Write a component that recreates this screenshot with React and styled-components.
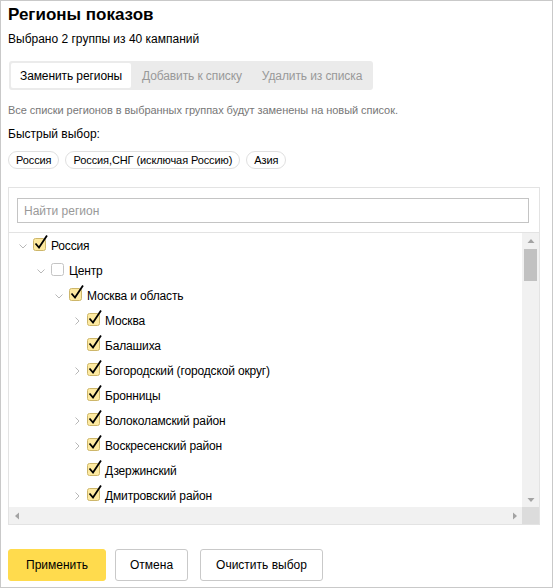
import React from 'react'
import styled, { createGlobalStyle } from 'styled-components'

const GlobalStyle = createGlobalStyle`
  html, body {
    margin: 0;
    padding: 0;
    background: #fff;
  }
  * {
    box-sizing: border-box;
  }
  body {
    font-family: "Liberation Sans", Arial, sans-serif;
    color: #000;
  }
`

const rows = [
  { level: 0, label: 'Россия', checked: true, arrow: 'down' },
  { level: 1, label: 'Центр', checked: false, arrow: 'down' },
  { level: 2, label: 'Москва и область', checked: true, arrow: 'down' },
  { level: 3, label: 'Москва', checked: true, arrow: 'right' },
  { level: 3, label: 'Балашиха', checked: true },
  { level: 3, label: 'Богородский (городской округ)', checked: true, arrow: 'right' },
  { level: 3, label: 'Бронницы', checked: true },
  { level: 3, label: 'Волоколамский район', checked: true, arrow: 'right' },
  { level: 3, label: 'Воскресенский район', checked: true, arrow: 'right' },
  { level: 3, label: 'Дзержинский', checked: true },
  { level: 3, label: 'Дмитровский район', checked: true, arrow: 'right' },
]

const quick = ['Россия', 'Россия,СНГ (исключая Россию)', 'Азия']
const tabs = ['Заменить регионы', 'Добавить к списку', 'Удалить из списка']

export default function App() {
  return (
    <>
      <GlobalStyle />
      <Frame>
        <Title>Регионы показов</Title>
        <Subtitle>Выбрано 2 группы из 40 кампаний</Subtitle>
        <Tabs>
          {tabs.map((t, i) => (
            <Tab key={t} $active={i === 0}>{t}</Tab>
          ))}
        </Tabs>
        <Hint>Все списки регионов в выбранных группах будут заменены на новый список.</Hint>
        <Label>Быстрый выбор:</Label>
        <Chips>
          {quick.map(q => <Chip key={q}>{q}</Chip>)}
        </Chips>
        <Panel>
          <SearchWrap>
            <Search placeholder="Найти регион" />
          </SearchWrap>
          <TreeArea>
            <List>
              {rows.map(r => (
                <Row key={r.label} $level={r.level}>
                  <Arrow>{r.arrow && <Chevron dir={r.arrow} />}</Arrow>
                  <Check checked={r.checked} />
                  <RowLabel>{r.label}</RowLabel>
                </Row>
              ))}
            </List>
            <VScroll>
              <ScrollBtn><Tri dir="up" /></ScrollBtn>
              <Thumb />
              <VSpace />
              <ScrollBtn><Tri dir="down" /></ScrollBtn>
            </VScroll>
            <HScroll>
              <ScrollBtn><Tri dir="left" /></ScrollBtn>
              <ScrollBtn><Tri dir="right" /></ScrollBtn>
            </HScroll>
            <Corner />
          </TreeArea>
        </Panel>
        <Footer>
          <Button $pad={17} $primary>Применить</Button>
          <Button $pad={14}>Отмена</Button>
          <Button $pad={15} $spaced>Очистить выбор</Button>
        </Footer>
      </Frame>
    </>
  )
}

const Chevron = ({ dir }) => (
  <svg width="8" height="8" viewBox="0 0 8 8">
    {dir === 'down'
      ? <path d="M0.5 2.5 L4 6 L7.5 2.5" fill="none" stroke="#b8b8b8" strokeWidth="1" />
      : <path d="M2.5 0.5 L6 4 L2.5 7.5" fill="none" stroke="#b8b8b8" strokeWidth="1" />}
  </svg>
)

const Check = ({ checked }) => (
  <CheckBox>
    <svg width="16" height="18" viewBox="0 0 16 18">
      <rect
        x="0.5" y="4.5" width="12" height="12" rx="2"
        fill={checked ? '#fde9a0' : '#fff'}
        stroke={checked ? '#cdb66a' : '#c4c4c4'}
      />
      {checked && (
        <path d="M2.5 9.5 L6 13.5 L14 1.5" fill="none" stroke="#000" strokeWidth="1.8" />
      )}
    </svg>
  </CheckBox>
)

const Tri = ({ dir }) => {
  const d = {
    up: 'M0.5 5 L4 1 L7.5 5 Z',
    down: 'M0.5 3 L4 7 L7.5 3 Z',
    left: 'M5 0.5 L1 4 L5 7.5 Z',
    right: 'M3 0.5 L7 4 L3 7.5 Z',
  }[dir]
  return (
    <svg width="8" height="8" viewBox="0 0 8 8">
      <path d={d} fill="#a3a3a3" />
    </svg>
  )
}

const Frame = styled.div`
  width: 553px;
  height: 588px;
  border: 1px solid #c9c9c9;
  padding: 3px 7px 0;
  display: flex;
  flex-direction: column;
`

const Title = styled.h1`
  margin: 0;
  font-size: 17px;
  line-height: 22px;
  font-weight: bold;
`

const Subtitle = styled.div`
  margin-top: 5px;
  font-size: 12px;
  line-height: 16px;
`

const Tabs = styled.div`
  margin-top: 14px;
  margin-left: 1px;
  align-self: flex-start;
  display: flex;
  gap: 2px;
  padding: 2px;
  background: #ebebeb;
  border-radius: 3px;
`

const Tab = styled.div`
  height: 25px;
  padding: 0 9px;
  display: flex;
  align-items: center;
  font-size: 12px;
  letter-spacing: -0.1px;
  border-radius: 2px;
  background: ${p => (p.$active ? '#fff' : 'transparent')};
  color: ${p => (p.$active ? '#000' : '#999')};
`

const Hint = styled.div`
  margin-top: 13px;
  font-size: 11px;
  line-height: 14px;
  letter-spacing: -0.05px;
  color: #777;
`

const Label = styled.div`
  margin-top: 9px;
  font-size: 12px;
  line-height: 16px;
`

const Chips = styled.div`
  margin-top: 9px;
  display: flex;
  gap: 6px;
`

const Chip = styled.div`
  height: 18px;
  padding: 0 7px;
  display: flex;
  align-items: center;
  border: 1px solid #e0e0e0;
  border-radius: 9px;
  font-size: 11px;
  letter-spacing: -0.1px;
`

const Panel = styled.div`
  margin-top: 18px;
  width: 532px;
  border: 1px solid #e3e3e3;
  display: flex;
  flex-direction: column;
`

const SearchWrap = styled.div`
  padding: 10px 10px 9px 8px;
  border-bottom: 1px solid #e3e3e3;
`

const Search = styled.input`
  display: block;
  width: 100%;
  height: 25px;
  border: 1px solid #c4c4c4;
  padding: 0 6px;
  font-family: "Liberation Sans", Arial, sans-serif;
  font-size: 12px;
  outline: none;
  &::placeholder {
    color: #999;
  }
`

const TreeArea = styled.div`
  display: grid;
  grid-template-columns: 1fr 17px;
  grid-template-rows: 274px 17px;
`

const List = styled.div`
  overflow: hidden;
`

const Row = styled.div`
  height: 25px;
  display: flex;
  align-items: center;
  padding-left: ${p => 9 + p.$level * 18}px;
`

const Arrow = styled.span`
  width: 10px;
  height: 10px;
  display: flex;
  align-items: center;
  justify-content: center;
`

const CheckBox = styled.span`
  margin-left: 5px;
  width: 16px;
  height: 18px;
  margin-top: -6px;
  display: flex;
`

const RowLabel = styled.span`
  margin-left: 2px;
  font-size: 12px;
  letter-spacing: -0.15px;
`

const VScroll = styled.div`
  background: #f1f1f1;
  display: flex;
  flex-direction: column;
`

const ScrollBtn = styled.div`
  width: 17px;
  height: 17px;
  flex: none;
  display: flex;
  align-items: center;
  justify-content: center;
`

const Thumb = styled.div`
  margin: -1px 2px 0;
  height: 32px;
  background: #c1c1c1;
`

const VSpace = styled.div`
  flex: 1;
`

const HScroll = styled.div`
  background: #f1f1f1;
  display: flex;
  justify-content: space-between;
`

const Corner = styled.div`
  background: #dcdcdc;
`

const Footer = styled.div`
  margin-top: 24px;
  display: flex;
  gap: 9px;
`

const Button = styled.button`
  height: 32px;
  padding: 0 ${p => p.$pad}px;
  margin-left: ${p => (p.$spaced ? 3 : 0)}px;
  border-radius: 3px;
  border: 1px solid ${p => (p.$primary ? '#ffdb4d' : '#c9c9c9')};
  background: ${p => (p.$primary ? '#ffdb4d' : '#fff')};
  font-family: "Liberation Sans", Arial, sans-serif;
  font-size: 12px;
  color: #000;
`
